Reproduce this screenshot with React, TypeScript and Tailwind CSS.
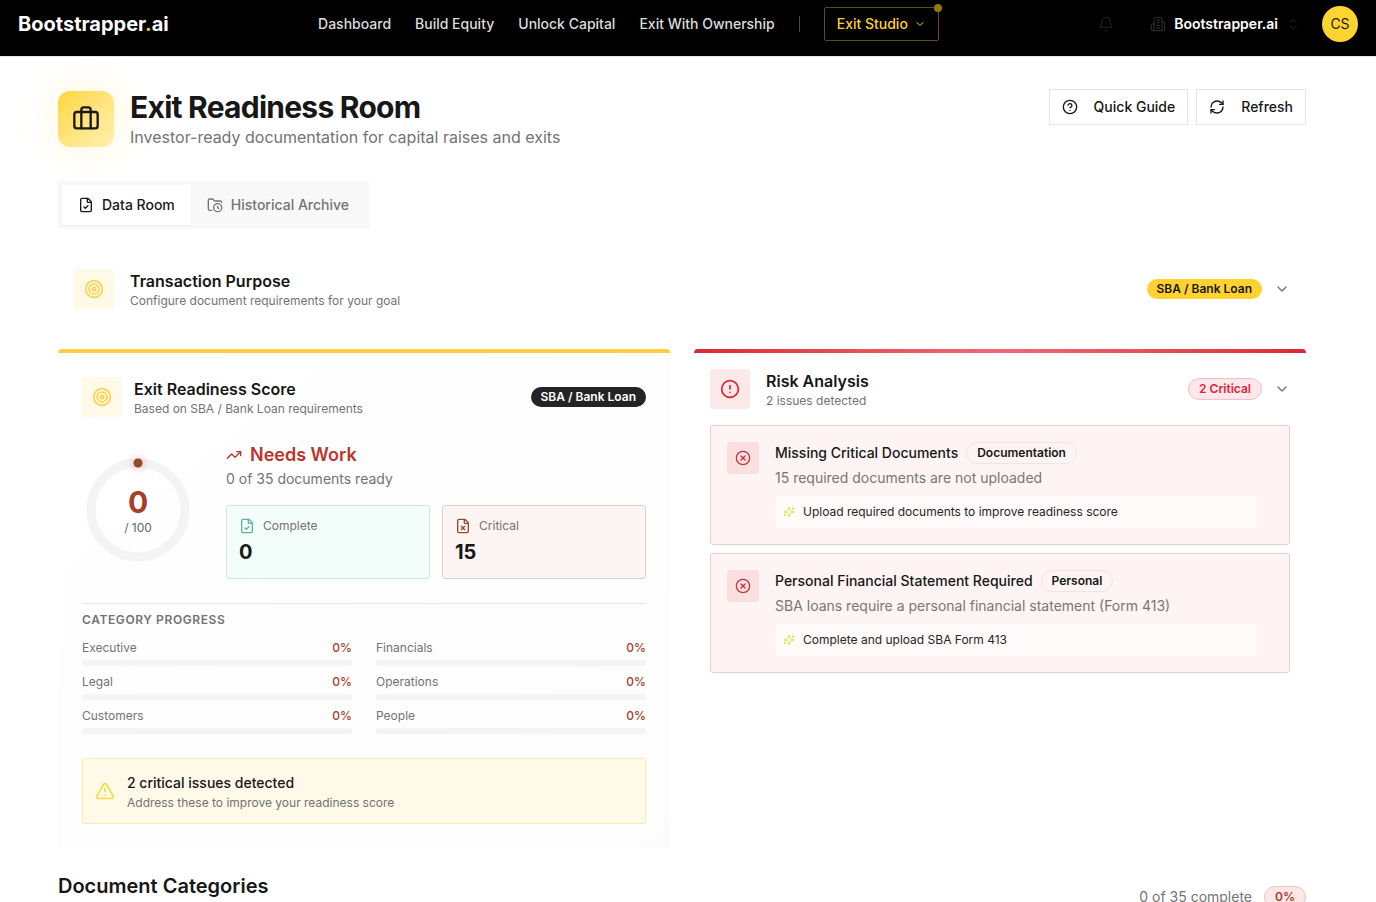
import React from 'react'
import {
  Bell,
  Briefcase,
  ChevronDown,
  ChevronsUpDown,
  CircleAlert,
  CircleQuestionMark,
  CircleX,
  FileCheck,
  FileX,
  FolderClock,
  RefreshCw,
  Target,
  TrendingUp,
  TriangleAlert,
} from 'lucide-react'

const NAV_LINKS = ['Dashboard', 'Build Equity', 'Unlock Capital', 'Exit With Ownership']

const CATEGORIES = [
  { name: 'Executive', value: 0 },
  { name: 'Financials', value: 0 },
  { name: 'Legal', value: 0 },
  { name: 'Operations', value: 0 },
  { name: 'Customers', value: 0 },
  { name: 'People', value: 0 },
]

const ISSUES = [
  {
    title: 'Missing Critical Documents',
    tag: 'Documentation',
    description: '15 required documents are not uploaded',
    action: 'Upload required documents to improve readiness score',
  },
  {
    title: 'Personal Financial Statement Required',
    tag: 'Personal',
    description: 'SBA loans require a personal financial statement (Form 413)',
    action: 'Complete and upload SBA Form 413',
  },
]

function BuildingIcon() {
  return (
    <svg
      viewBox="0 0 24 24"
      className="size-4 text-[#262626]"
      fill="none"
      stroke="currentColor"
      strokeWidth="2"
      strokeLinecap="round"
      strokeLinejoin="round"
    >
      <path d="M6 22V4a2 2 0 0 1 2-2h8a2 2 0 0 1 2 2v18Z" />
      <path d="M6 12H4a2 2 0 0 0-2 2v6a2 2 0 0 0 2 2h2" />
      <path d="M18 9h2a2 2 0 0 1 2 2v9a2 2 0 0 1-2 2h-2" />
      <path d="M10 6h4M10 10h4M10 14h4M10 18h4" />
    </svg>
  )
}

function SparkleIcon() {
  return (
    <svg
      viewBox="0 0 24 24"
      className="size-3 shrink-0 text-[#e6dc4c]"
      fill="none"
      stroke="currentColor"
      strokeWidth="2"
      strokeLinecap="round"
      strokeLinejoin="round"
    >
      <path d="M9.937 15.5A2 2 0 0 0 8.5 14.063l-6.135-1.582a.5.5 0 0 1 0-.962L8.5 9.936A2 2 0 0 0 9.937 8.5l1.582-6.135a.5.5 0 0 1 .963 0L14.063 8.5A2 2 0 0 0 15.5 9.937l6.135 1.581a.5.5 0 0 1 0 .964L15.5 14.063a2 2 0 0 0-1.437 1.437l-1.582 6.135a.5.5 0 0 1-.963 0z" />
      <path d="M20 3v4M22 5h-4M4 17v2M5 18H3" />
    </svg>
  )
}

function Header() {
  return (
    <header className="bg-black border-b border-[#e5e5e5]">
      <div className="h-14 pb-2 px-[18px] flex items-center justify-between">
        <a href="#" className="text-xl font-bold text-white">
          Bootstrapper<span className="text-[#ffc928]">.</span>ai
        </a>

        <nav className="flex items-center gap-6 text-sm font-medium text-[#dcdcdc]">
          {NAV_LINKS.map((link) => (
            <a key={link} href="#">{link}</a>
          ))}
          <span className="h-4 w-px bg-[#4a4a4a]" />
          <button
            type="button"
            className="relative flex items-center gap-1.5 h-[34px] px-3 rounded-xs border border-[#5f4b14] text-[#ffd230]"
          >
            Exit Studio
            <ChevronDown size={12} />
            <span className="absolute -top-1 -right-1 size-2 rounded-full bg-[#94770c]" />
          </button>
        </nav>

        <div className="flex items-center gap-4">
          <button type="button" aria-label="Notifications" className="size-9 flex items-center justify-center text-[#1c1c1c]">
            <Bell size={16} />
          </button>
          <button type="button" className="flex items-center gap-2 pl-2.5 pr-1.5 text-sm font-semibold text-white">
            <BuildingIcon />
            Bootstrapper.ai
            <ChevronsUpDown size={14} className="text-[#1c1c1c]" />
          </button>
          <button type="button" className="size-9 rounded-full bg-[#ffd42f] text-sm text-[#1a1a1a]">CS</button>
        </div>
      </div>
    </header>
  )
}

function PageTitle() {
  return (
    <div className="flex items-start justify-between">
      <div className="flex items-center gap-4">
        <div className="size-14 flex items-center justify-center rounded-xl bg-linear-to-br from-[#ffd633] to-[#fff0b0] shadow-[0_0_40px_rgba(255,214,51,0.22)]">
          <Briefcase size={28} className="text-[#1a1a1a]" />
        </div>
        <div>
          <h1 className="text-3xl leading-9 font-bold tracking-tight">Exit Readiness Room</h1>
          <p className="text-base text-[#737373]">Investor-ready documentation for capital raises and exits</p>
        </div>
      </div>
      <div className="flex gap-2 text-sm font-medium">
        <button type="button" className="h-9 px-3 flex items-center gap-4 bg-white border border-[#e5e5e5]">
          <CircleQuestionMark size={16} />
          Quick Guide
        </button>
        <button type="button" className="h-9 px-3 flex items-center gap-4 bg-white border border-[#e5e5e5]">
          <RefreshCw size={16} />
          Refresh
        </button>
      </div>
    </div>
  )
}

function Tabs() {
  return (
    <div role="tablist" className="mt-8 w-fit flex p-1 bg-[#f8f8f8] text-sm font-medium">
      <button type="button" role="tab" aria-selected="true" className="h-10 px-4 flex items-center gap-2 bg-white shadow-xs">
        <FileCheck size={16} />
        Data Room
      </button>
      <button type="button" role="tab" aria-selected="false" className="h-10 px-4 flex items-center gap-2 text-[#737373]">
        <FolderClock size={16} />
        Historical Archive
      </button>
    </div>
  )
}

function TargetTile() {
  return (
    <div className="size-10 flex items-center justify-center rounded-[3px] bg-[#fff9e8]">
      <Target size={20} className="text-[#ffd24a]" />
    </div>
  )
}

function TransactionPurpose() {
  return (
    <section className="my-6 p-4 flex items-center justify-between">
      <div className="flex items-center gap-4">
        <TargetTile />
        <div>
          <h2 className="text-base font-semibold">Transaction Purpose</h2>
          <p className="text-xs text-[#737373]">Configure document requirements for your goal</p>
        </div>
      </div>
      <button type="button" className="flex items-center gap-3">
        <span className="h-5 px-2.5 flex items-center rounded-full bg-[#ffd230] text-xs font-semibold">SBA / Bank Loan</span>
        <ChevronDown size={16} className="text-[#737373]" />
      </button>
    </section>
  )
}

function ScoreRing() {
  return (
    <div className="relative size-28 shrink-0 flex flex-col items-center justify-center">
      <svg viewBox="0 0 112 112" className="absolute inset-0 overflow-visible">
        <circle cx="56" cy="56" r="47" fill="none" stroke="#f4f4f4" strokeWidth="9" />
        <circle cx="56" cy="9" r="4.5" fill="#8c4a26" className="drop-shadow-[0_0_4px_rgba(220,38,60,0.5)]" />
      </svg>
      <span className="relative text-3xl leading-9 font-bold text-[#a5402b]">0</span>
      <span className="relative text-xs text-[#666666]">/ 100</span>
    </div>
  )
}

function ReadinessScore() {
  return (
    <section className="rounded-t-sm overflow-hidden bg-linear-to-br from-white to-[#fcfcfc]">
      <div className="h-1 bg-[#ffcc42]" />
      <div className="p-6">
        <div className="flex items-center justify-between">
          <div className="flex items-center gap-3">
            <TargetTile />
            <div>
              <h2 className="text-base font-semibold">Exit Readiness Score</h2>
              <p className="text-xs text-[#737373]">Based on SBA / Bank Loan requirements</p>
            </div>
          </div>
          <span className="h-5 px-2.5 flex items-center rounded-full bg-[#242424] text-xs font-semibold text-white">
            SBA / Bank Loan
          </span>
        </div>

        <div className="mt-6 flex items-center gap-8">
          <ScoreRing />
          <div className="flex-1">
            <div className="flex items-center gap-2 text-[#bd342f]">
              <TrendingUp size={16} />
              <h3 className="text-lg leading-7 font-semibold">Needs Work</h3>
            </div>
            <p className="text-sm text-[#737373]">0 of 35 documents ready</p>
            <div className="mt-4 grid grid-cols-2 gap-3">
              <div className="p-3 rounded-[3px] border border-[#cfe9e0] bg-[#f3fdfa]">
                <div className="flex items-center gap-2 text-xs text-[#737373]">
                  <FileCheck size={16} className="text-[#5cb896]" />
                  Complete
                </div>
                <p className="mt-1 text-xl leading-7 font-bold">0</p>
              </div>
              <div className="p-3 rounded-[3px] border border-[#dfcdca] bg-[#fcf4f3]">
                <div className="flex items-center gap-2 text-xs text-[#737373]">
                  <FileX size={16} className="text-[#93492f]" />
                  Critical
                </div>
                <p className="mt-1 text-xl leading-7 font-bold">15</p>
              </div>
            </div>
          </div>
        </div>

        <div className="mt-6 pt-2 border-t border-[#e5e5e5]">
          <h3 className="text-xs font-semibold uppercase tracking-wider text-[#737373]">Category Progress</h3>
          <div className="mt-3 grid grid-cols-2 gap-x-6 gap-y-2">
            {CATEGORIES.map(({ name, value }) => (
              <div key={name}>
                <div className="flex justify-between text-xs text-[#737373]">
                  <span>{name}</span>
                  <span className="font-medium text-[#a8402f]">{value}%</span>
                </div>
                <div className="mt-1 h-1.5 rounded-[3px] bg-[#f4f4f4] overflow-hidden">
                  <div className="h-full bg-[#ffcc42]" style={{ width: `${value}%` }} />
                </div>
              </div>
            ))}
          </div>
        </div>

        <div className="mt-6 p-3 flex items-center gap-3 rounded-[3px] border border-[#f5eeaa] bg-[#fff9e8]">
          <TriangleAlert size={20} className="text-[#f2dc3c]" />
          <div>
            <p className="text-sm leading-6 font-medium">2 critical issues detected</p>
            <p className="text-xs text-[#737373]">Address these to improve your readiness score</p>
          </div>
        </div>
      </div>
    </section>
  )
}

function RiskAnalysis() {
  return (
    <section className="rounded-t-sm overflow-hidden">
      <div className="h-1 bg-linear-to-r from-[#de2436] via-[#ee6a76] to-[#de2436]" />
      <div className="p-4">
        <div className="flex items-center justify-between">
          <div className="flex items-center gap-4">
            <div className="size-10 flex items-center justify-center rounded-[3px] bg-[#fbe8e9]">
              <CircleAlert size={20} className="text-[#de2436]" />
            </div>
            <div>
              <h2 className="text-base font-semibold">Risk Analysis</h2>
              <p className="text-xs text-[#737373]">2 issues detected</p>
            </div>
          </div>
          <button type="button" className="flex items-center gap-3">
            <span className="px-2.5 py-0.5 rounded-full border border-[#f3bfc4] bg-[#fce8ea] text-xs font-semibold text-[#d9263a]">
              2 Critical
            </span>
            <ChevronDown size={16} className="text-[#737373]" />
          </button>
        </div>

        <ul className="mt-4 flex flex-col gap-2">
          {ISSUES.map(({ title, tag, description, action }) => (
            <li key={title} className="py-4 pl-4 pr-8 flex items-start gap-4 rounded-[3px] border border-[#e4cfcd] bg-[#fdf4f3]">
              <div className="size-8 shrink-0 flex items-center justify-center rounded-[3px] bg-[#f8e0e0]">
                <CircleX size={16} className="text-[#c4383c]" />
              </div>
              <div className="flex-1">
                <div className="flex items-center gap-2">
                  <h3 className="text-sm font-medium">{title}</h3>
                  <span className="px-2.5 py-0.5 rounded-full border border-[#efe4e3] text-xs font-semibold">{tag}</span>
                </div>
                <p className="mt-1 text-sm text-[#7b7472]">{description}</p>
                <div className="mt-2 p-2 flex items-center gap-2 bg-[#fefaf9] text-xs text-[#262626]">
                  <SparkleIcon />
                  {action}
                </div>
              </div>
            </li>
          ))}
        </ul>
      </div>
    </section>
  )
}

function App() {
  return (
    <div className="h-screen overflow-y-auto [scrollbar-width:none] bg-white text-[#171717] font-['Inter',sans-serif]">
      <Header />
      <main className="pt-8 pl-[58px] pr-[70px]">
        <PageTitle />
        <Tabs />
        <TransactionPurpose />
        <div className="grid grid-cols-2 gap-6">
          <ReadinessScore />
          <RiskAnalysis />
        </div>

        <section className="mt-6 h-[50px] flex items-center justify-between">
          <h2 className="self-start text-xl leading-7 font-semibold">Document Categories</h2>
          <div className="flex items-center gap-3 text-sm text-[#737373]">
            0 of 35 complete
            <span className="px-2.5 py-0.5 rounded-full border border-[#e8c4c4] bg-[#fce6e6] text-xs font-semibold text-[#9b4532]">
              0%
            </span>
          </div>
        </section>
      </main>
    </div>
  )
}

export default App
